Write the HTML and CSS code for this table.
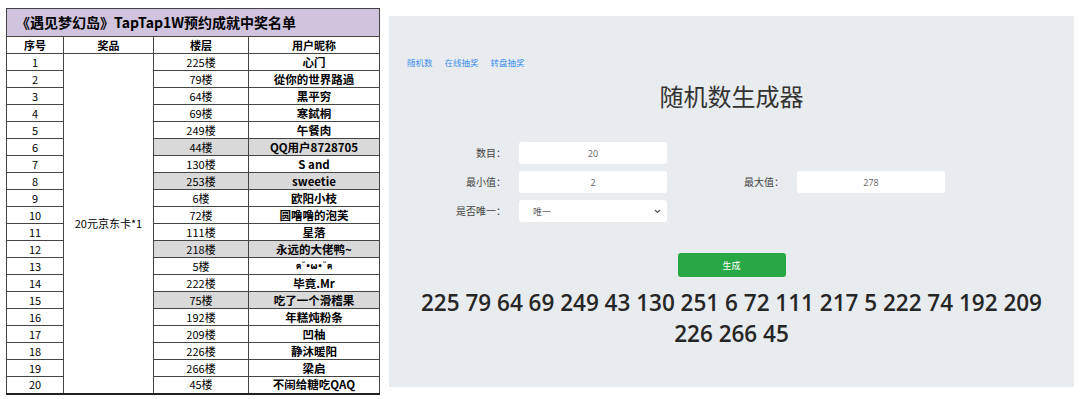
FILE: index.html
```html
<!DOCTYPE html>
<html lang="zh">
<head>
<meta charset="utf-8">
<link rel="stylesheet" href="styles.css">
</head>
<body>
<div class="page">
  <table class="sheet">
    <colgroup>
      <col class="c1"><col class="c2"><col class="c3"><col class="c4">
    </colgroup>
    <tr class="title-row"><td colspan="4">《遇见梦幻岛》TapTap1W预约成就中奖名单</td></tr>
    <tr class="head"><th>序号</th><th>奖品</th><th>楼层</th><th>用户昵称</th></tr>
    <tr><td>1</td><td class="prize" rowspan="20">20元京东卡*1</td><td>225楼</td><td class="nick">心门</td></tr>
    <tr><td>2</td><td>79楼</td><td class="nick">從你的世界路過</td></tr>
    <tr><td>3</td><td>64楼</td><td class="nick">黑平穷</td></tr>
    <tr><td>4</td><td>69楼</td><td class="nick">寒鋱桐</td></tr>
    <tr><td>5</td><td>249楼</td><td class="nick">午餐肉</td></tr>
    <tr class="hl"><td>6</td><td>44楼</td><td class="nick">QQ用户8728705</td></tr>
    <tr><td>7</td><td>130楼</td><td class="nick">S and</td></tr>
    <tr class="hl"><td>8</td><td>253楼</td><td class="nick">sweetie</td></tr>
    <tr><td>9</td><td>6楼</td><td class="nick">欧阳小枝</td></tr>
    <tr><td>10</td><td>72楼</td><td class="nick">圆噜噜的泡芙</td></tr>
    <tr><td>11</td><td>111楼</td><td class="nick">星落</td></tr>
    <tr class="hl"><td>12</td><td>218楼</td><td class="nick">永远的大佬鸭~</td></tr>
    <tr><td>13</td><td>5楼</td><td class="nick tiny">ฅ˘•ω•˘ฅ</td></tr>
    <tr><td>14</td><td>222楼</td><td class="nick">毕竟.Mr</td></tr>
    <tr class="hl"><td>15</td><td>75楼</td><td class="nick">吃了一个滑稽果</td></tr>
    <tr><td>16</td><td>192楼</td><td class="nick">年糕炖粉条</td></tr>
    <tr><td>17</td><td>209楼</td><td class="nick">凹柚</td></tr>
    <tr><td>18</td><td>226楼</td><td class="nick">静沐暖阳</td></tr>
    <tr><td>19</td><td>266楼</td><td class="nick">梁启</td></tr>
    <tr class="last"><td>20</td><td>45楼</td><td class="nick">不闹给糖吃QAQ</td></tr>
  </table>

  <div class="panel">
    <nav class="nav">
      <a href="#">随机数</a><a href="#">在线抽奖</a><a href="#">转盘抽奖</a>
    </nav>
    <h1 class="heading">随机数生成器</h1>
    <div class="form">
      <label class="lbl">数目：</label>
      <input class="field" value="20">
      <span class="empty"></span><span class="empty"></span>
      <label class="lbl">最小值：</label>
      <input class="field" value="2">
      <label class="lbl">最大值：</label>
      <input class="field" value="278">
      <label class="lbl">是否唯一：</label>
      <div class="field select"><span>唯一</span>
        <svg class="chev" width="7" height="5" viewBox="0 0 7 5"><path d="M1 1 L3.5 3.5 L6 1" fill="none" stroke="#555" stroke-width="1.2"/></svg>
      </div>
    </div>
    <div class="btn-row"><button class="btn">生成</button></div>
    <div class="result">225 79 64 69 249 43 130 251 6 72 111 217 5 222 74 192 209 226 266 45</div>
  </div>
</div>
</body>
</html>
```

FILE: styles.css
```css
* { box-sizing: border-box; }
html, body { margin: 0; padding: 0; background: #fff; }
body { width: 1080px; height: 399px; overflow: hidden; }
.page {
  display: flex;
  align-items: flex-start;
  padding: 8px 0 0 6px;
}
.sheet {
  border-collapse: collapse;
  width: 373px;
  table-layout: fixed;
  font-family: "Noto Sans CJK SC", sans-serif;
  font-size: 11px;
  color: #000;
  border: 1px solid #333;
  border-bottom: 2px solid #222;
}
.c1 { width: 57px; }
.c2 { width: 90px; }
.c3 { width: 95px; }
.c4 { width: 131px; }
.sheet td, .sheet th {
  border: 1px solid #444;
  height: 17px;
  padding: 0;
  text-align: center;
  line-height: 15px;
  white-space: nowrap;
  overflow: hidden;
}
.title-row td {
  height: 28px;
  background: #cfc3dd;
  text-align: left;
  padding-left: 9px;
  font-size: 14px;
  font-weight: 700;
  border-bottom: 1px solid #444;
}
.head th { font-weight: 700; font-size: 11px; }
.nick { font-weight: 700; font-size: 11.5px; }
.tiny { font-size: 8px; font-family: "DejaVu Sans", "Noto Sans", sans-serif; }
.prize { background: #fff; }
.hl td:nth-last-child(-n+2) { background: #d9d9d9; }
.hl td:first-child { background: #fff; }

.panel {
  margin: 8px 0 0 9px;
  width: 685px;
  height: 371px;
  background: #e9ecef;
  font-family: "Noto Sans CJK SC", "Open Sans", sans-serif;
  color: #333;
  padding-top: 40px;
}
.nav {
  display: flex;
  gap: 12px;
  padding-left: 18px;
  height: 12px;
  line-height: 12px;
  font-size: 8.5px;
}
.nav a { color: #3b8ff0; text-decoration: none; }
.heading {
  margin: 16px 0 0;
  text-align: center;
  font-size: 24px;
  line-height: 24px;
  font-weight: 400;
  color: #333;
}
.form {
  margin-top: 34px;
  display: grid;
  grid-template-columns: 130px 148px 130px 148px;
  grid-auto-rows: 22px;
  row-gap: 7px;
}
.lbl {
  text-align: right;
  padding-right: 13px;
  font-size: 10px;
  line-height: 22px;
  color: #444;
}
.field {
  height: 22px;
  border: none;
  border-radius: 3px;
  background: #fff;
  font-family: "Open Sans", "Noto Sans CJK SC", sans-serif;
  font-size: 9px;
  color: #666;
  text-align: center;
  outline: none;
  padding: 0;
  width: 148px;
}
.select {
  display: flex;
  align-items: center;
  justify-content: space-between;
  padding: 0 6px 0 14px;
  font-family: "Noto Sans CJK SC", sans-serif;
}
.btn-row {
  display: flex;
  justify-content: center;
  margin-top: 31px;
}
.btn {
  width: 108px;
  height: 24px;
  border: none;
  border-radius: 3px;
  background: #28a745;
  color: #fff;
  font-family: "Noto Sans CJK SC", sans-serif;
  font-size: 9px;
  padding: 0;
}
.result {
  margin: 10px auto 0;
  width: 660px;
  text-align: center;
  font-family: "Open Sans", sans-serif;
  font-weight: 600;
  font-size: 22.5px;
  line-height: 31px;
  color: #262626;
}
```
